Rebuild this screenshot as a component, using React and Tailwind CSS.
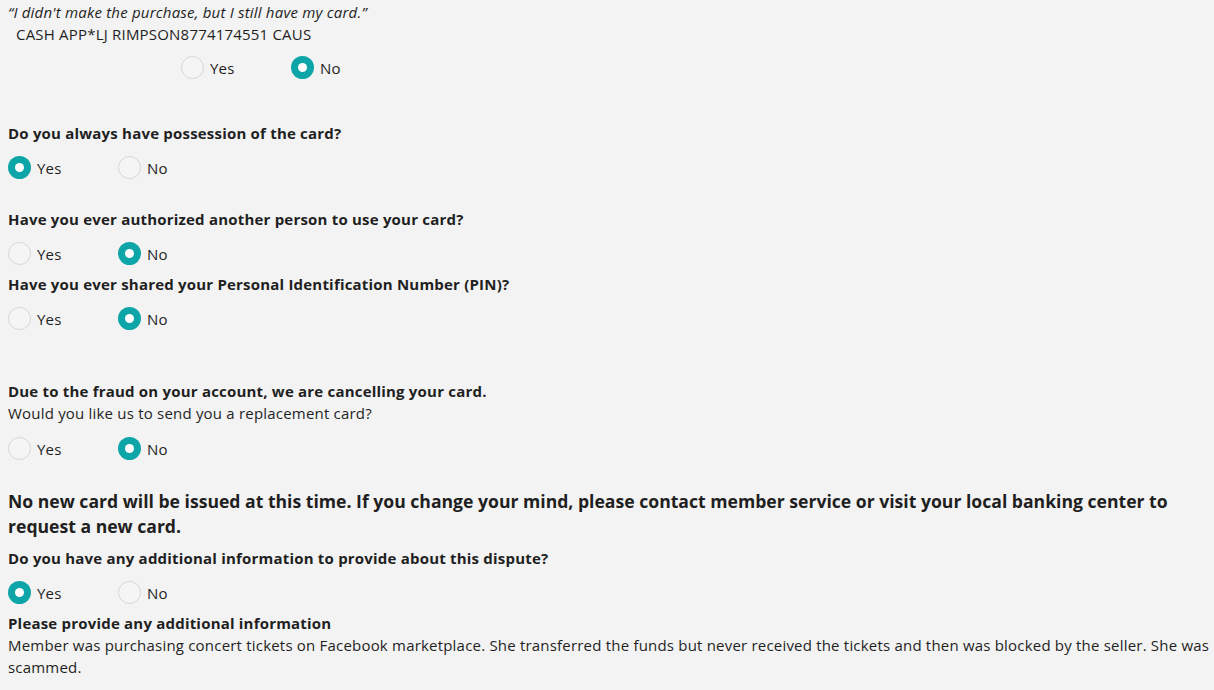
import { useState } from 'react'

function Radio({ checked }) {
  return checked ? (
    <span className="w-[23px] h-[23px] rounded-full bg-[#0ea5a8] flex items-center justify-center shrink-0">
      <span className="w-[9px] h-[9px] rounded-full bg-white" />
    </span>
  ) : (
    <span className="w-[23px] h-[23px] rounded-full border border-[#d3d6db] bg-[#f5f5f5] shrink-0" />
  )
}

function YesNo({ value, className = '' }) {
  return (
    <div className={`flex items-center h-[23px] ${className}`}>
      <label className="flex items-center w-[110px]">
        <Radio checked={value === 'yes'} />
        <span className="ml-[6px]">Yes</span>
      </label>
      <label className="flex items-center">
        <Radio checked={value === 'no'} />
        <span className="ml-[6px]">No</span>
      </label>
    </div>
  )
}

export default function App() {
  const [answers] = useState({
    purchase: 'no', possession: 'yes', authorized: 'no', pin: 'no', replace: 'no', extra: 'yes',
  })

  return (
    <div className="min-h-[690px] bg-[#f3f3f3] text-[#1f1f1f] text-[15px] tracking-[0.2px] leading-[22px] font-['Open_Sans',sans-serif] pl-[8px] pr-[4px] pt-[1px]">
      <p className="italic">“I didn't make the purchase, but I still have my card.”</p>
      <p className="pl-[8px]">CASH APP*LJ RIMPSON8774174551 CAUS</p>
      <YesNo value={answers.purchase} className="mt-[11px] ml-[173px]" />

      <p className="font-bold mt-[43px]">Do you always have possession of the card?</p>
      <YesNo value={answers.possession} className="mt-[12px]" />

      <p className="font-bold mt-[29px]">Have you ever authorized another person to use your card?</p>
      <YesNo value={answers.authorized} className="mt-[12px]" />

      <p className="font-bold mt-[8px]">Have you ever shared your Personal Identification Number (PIN)?</p>
      <YesNo value={answers.pin} className="mt-[12px]" />

      <p className="font-bold mt-[50px]">Due to the fraud on your account, we are cancelling your card.</p>
      <p>Would you like us to send you a replacement card?</p>
      <YesNo value={answers.replace} className="mt-[13px]" />

      <p className="font-bold text-[17.6px] tracking-normal leading-[25px] mt-[29px]">
        No new card will be issued at this time. If you change your mind, please contact member service or visit your local banking center to request a new card.
      </p>
      <p className="font-bold mt-[8px]">Do you have any additional information to provide about this dispute?</p>
      <YesNo value={answers.extra} className="mt-[12px]" />

      <p className="font-bold mt-[8px]">Please provide any additional information</p>
      <p>
        Member was purchasing concert tickets on Facebook marketplace. She transferred the funds but never received the tickets and then was blocked by the seller. She was scammed.
      </p>
    </div>
  )
}
